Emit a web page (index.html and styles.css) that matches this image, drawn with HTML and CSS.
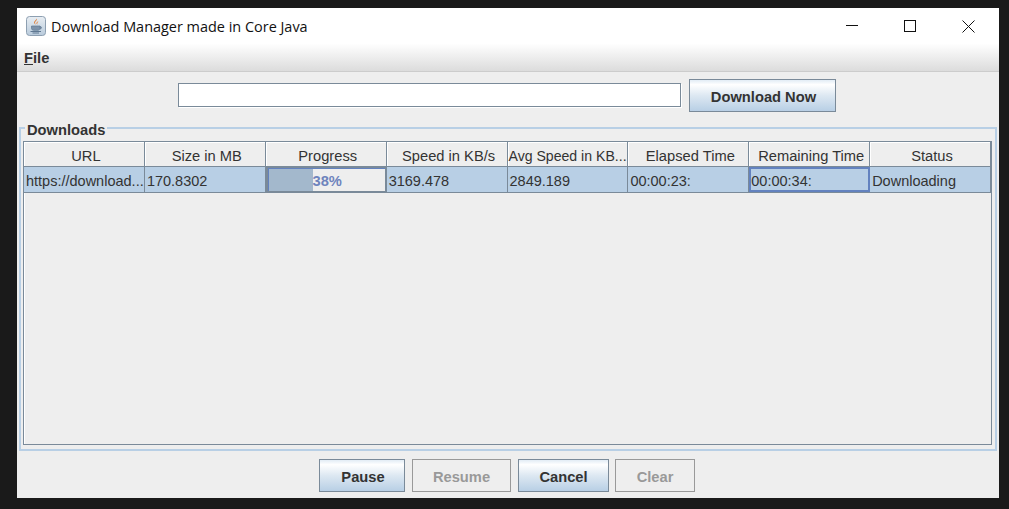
FILE: index.html
```html
<!DOCTYPE html>
<html lang="en">
<head>
<meta charset="utf-8">
<title>Download Manager made in Core Java</title>
<link rel="stylesheet" href="styles.css">
</head>
<body>
<div class="window">
  <header class="chrome">
    <div class="titlebar">
      <svg class="app-icon" width="20" height="20" viewBox="0 0 20 20">
        <defs>
          <linearGradient id="tile" x1="0" y1="0" x2="0" y2="1">
            <stop offset="0" stop-color="#e9eef3"/>
            <stop offset="1" stop-color="#b9cbdc"/>
          </linearGradient>
        </defs>
        <rect x="0.5" y="0.5" width="19" height="19" rx="3" fill="url(#tile)" stroke="#8d9fb1"/>
        <path d="M10.5 2.5c1.5 2-2.5 3-1.2 5.2.4.7 1 1 1 1-1.6-.5-2.6-1.6-2-3 .5-1.200 2.100-1.700 2.200-3.200zM12.300 5c.2 1.300-1.800 1.800-.9 3.400-1-.6-1.200-1.400-.7-2 .4-.6 1.200-.8 1.600-1.400z" fill="#e0762a"/>
        <path d="M5.500 10h8.500v2.300c0 1.200-1 2-2 2H7.500c-1 0-2-.8-2-2zM14 10.500c2 0 2 2.300 0 2.500" fill="#7e93aa" stroke="#5f7892" stroke-width=".7"/>
        <path d="M4.500 15.500h10.500M6.500 17h6.500" stroke="#5f7892" fill="none"/>
      </svg>
      <span class="title">Download Manager made in Core Java</span>
      <div class="controls">
        <svg width="12" height="13" viewBox="0 0 12 13"><path d="M0 5.500h12" stroke="#111" fill="none"/></svg>
        <svg width="12" height="13" viewBox="0 0 12 13"><rect x="0.500" y="0.500" width="11" height="11" stroke="#111" fill="none"/></svg>
        <svg width="13" height="13" viewBox="0 0 13 13"><path d="M.5.500l12 12M12.500.500l-12 12" stroke="#111" fill="none"/></svg>
      </div>
    </div>
    <nav class="menubar"><span class="menu"><u>F</u>ile</span></nav>
  </header>

  <main class="content">
    <div class="toolbar">
      <input class="url-input" type="text" aria-label="Download URL">
      <button class="btn btn-download" type="button">Download Now</button>
    </div>

    <fieldset class="group">
      <legend class="group-title">Downloads</legend>
      <div class="table">
        <div class="row head">
          <div class="cell">URL</div>
          <div class="cell">Size in MB</div>
          <div class="cell">Progress</div>
          <div class="cell">Speed in KB/s</div>
          <div class="cell tight">Avg Speed in KB...</div>
          <div class="cell">Elapsed Time</div>
          <div class="cell">Remaining Time</div>
          <div class="cell">Status</div>
        </div>
        <div class="row data">
          <div class="cell">https://download...</div>
          <div class="cell">170.8302</div>
          <div class="cell progress">
            <div class="bar"><div class="fill" style="width:38%"></div></div>
            <span class="pct">38%</span>
          </div>
          <div class="cell">3169.478</div>
          <div class="cell">2849.189</div>
          <div class="cell">00:00:23:</div>
          <div class="cell focused">00:00:34:</div>
          <div class="cell">Downloading</div>
        </div>
      </div>
    </fieldset>

    <div class="actions">
      <button class="btn btn-pause" type="button">Pause</button>
      <button class="btn btn-resume" type="button" disabled>Resume</button>
      <button class="btn btn-cancel" type="button">Cancel</button>
      <button class="btn btn-clear" type="button" disabled>Clear</button>
    </div>
  </main>
</div>
</body>
</html>
```
FILE: styles.css
```css
* { box-sizing: border-box; }

html, body { height: 100%; }

body {
  margin: 0;
  padding: 8px 10px 11px 17px;
  background: #1a1a1a;
  font-family: "Liberation Sans", Arial, sans-serif;
  font-size: 14.7px;
  color: #333;
  overflow: hidden;
}

.window {
  height: 490px;
  display: flex;
  flex-direction: column;
  background: #eee;
}

.chrome {
  height: 64px;
  flex: none;
  background: linear-gradient(#fff 0, #fff 56%, #dcdcdc 100%);
  border-bottom: 1px solid #ccc;
}

.titlebar {
  height: 36px;
  display: flex;
  align-items: center;
  padding-left: 9px;
}

.app-icon { flex: none; margin-right: 5px; }

.title {
  font-family: "Open Sans", "Noto Sans", sans-serif;
  font-size: 14.45px;
  color: #111;
}

.controls {
  margin-left: auto;
  display: flex;
  align-items: center;
  gap: 46px;
  padding-right: 24px;
  padding-top: 1px;
}

.menubar {
  height: 27px;
  padding: 5px 0 0 7px;
}

.menu {
  font-weight: bold;
  line-height: 18px;
  color: #333;
}

.content {
  flex: 1;
  min-height: 0;
  display: flex;
  flex-direction: column;
}

.toolbar {
  display: flex;
  align-items: flex-start;
  justify-content: center;
  gap: 8px;
  padding: 7px 2px 0 0;
}

.url-input {
  width: 503px;
  height: 24px;
  margin-top: 4px;
  padding: 0 2px;
  background: #fff;
  border: 1px solid #7a8a99;
  box-shadow: 1px 1px 0 #fff;
  border-radius: 0;
  outline: none;
}

.btn {
  height: 33px;
  padding: 2px 0 0;
  font: bold 14.7px "Liberation Sans", Arial, sans-serif;
  color: #333;
  border: 1px solid #7a8a99;
  border-radius: 0;
  background: linear-gradient(#e2ecf5 0, #fff 15%, #dde8f2 50%, #b8cfe5 100%);
}

.btn:disabled {
  color: #999;
  background: #eee;
  border-color: #999;
}

.btn-download { width: 147px; padding-left: 2px; }
.btn-pause { width: 86px; padding-left: 2px; }
.btn-resume { width: 99px; }
.btn-cancel { width: 91px; }
.btn-clear { width: 80px; margin-left: -1px; }

.group {
  flex: 1;
  min-height: 0;
  min-width: 0;
  margin: 6px 2px 0;
  padding: 0 3px 4px 2px;
  border: 2px solid #b8cfe5;
  display: flex;
  flex-direction: column;
}

.group-title {
  margin-left: 2px;
  padding: 4px 2px 0;
  font-weight: bold;
  line-height: 16px;
}

.table {
  flex: 1;
  min-height: 0;
  margin-top: 3px;
  border: 1px solid #7a8a99;
  box-shadow: inset 1px 1px 0 #fff;
  background: #eee;
  font-size: 14.5px;
}

.row {
  display: grid;
  grid-template-columns: repeat(8, 1fr);
}

.cell {
  min-width: 0;
  white-space: nowrap;
  overflow: hidden;
}

.head { height: 25px; }

.head .cell {
  padding-left: 4px;
  font-size: 14.7px;
  line-height: 28px;
  text-align: center;
  border-right: 1px solid #7a8a99;
  border-bottom: 1px solid #7a8a99;
  box-shadow: inset 1px 1px 0 #fff;
}

.head .tight {
  padding-left: 1px;
  font-size: 14.1px;
  text-align: left;
}

.data {
  height: 26px;
  background: #b8cfe5;
  border-bottom: 1px solid #7a8a99;
}

.data .cell {
  line-height: 29px;
  padding-left: 2px;
  border-right: 1px solid #7a8a99;
}

.data .progress {
  display: grid;
  padding: 0;
  border: 2px solid #7a8a99;
  border-top-width: 1px;
  border-bottom-width: 1px;
  background: #eee;
}

.bar, .pct { grid-area: 1 / 1; }

.bar {
  border-top: 1px solid #6382bf;
  border-left: 1px solid #6382bf;
}

.fill {
  height: 100%;
  background: #a3b8cc;
}

.pct {
  padding-left: 2px;
  text-align: center;
  font-weight: bold;
  font-size: 14.7px;
  line-height: 27px;
  color: #6f84bd;
}

.data .focused {
  border: 2px solid #6382bf;
  line-height: 25px;
  padding-left: 0;
}

.actions {
  display: flex;
  justify-content: center;
  gap: 7px;
  padding: 8px 0 6px;
  margin-left: -2px;
}
```
